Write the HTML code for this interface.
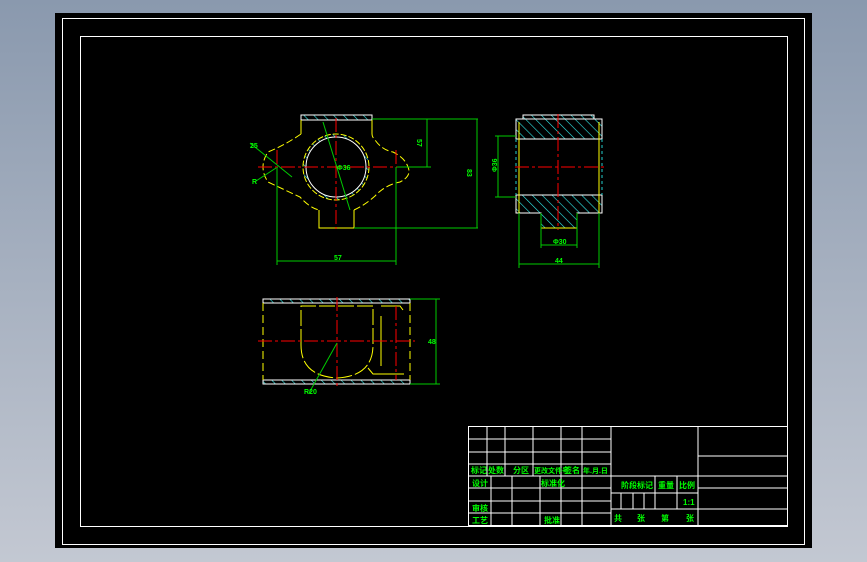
<!DOCTYPE html>
<html><head><meta charset="utf-8"><style>
html,body{margin:0;padding:0}
body{width:867px;height:562px;overflow:hidden;background:linear-gradient(#8a99ae,#c3c8d2);position:relative}
svg{position:absolute;left:0;top:0}
text{font-family:"Liberation Sans","Noto Sans CJK SC",sans-serif;fill:#0f0;font-weight:bold}
</style></head><body>
<svg width="867" height="562" viewBox="0 0 867 562">
<defs>
<pattern id="h" width="7" height="7" patternUnits="userSpaceOnUse" patternTransform="rotate(-45)">
<line x1="0" y1="0" x2="0" y2="7" stroke="#3ee" stroke-width="1.2"/></pattern>
</defs>
<rect x="55" y="13" width="757" height="535" fill="#000"/>
<rect x="62.5" y="18.5" width="742" height="526" fill="none" stroke="#fff"/>
<rect x="80.5" y="36.5" width="707" height="490" fill="none" stroke="#fff"/>

<!-- front view -->
<g fill="none">
<rect x="301" y="115" width="71" height="5" fill="url(#h)" stroke="#fff"/>
<path d="M301 120 V134 M372 120 V134" stroke="#ff0"/>
<path d="M301 134 Q285 145 268 152 Q258 167 268 182 Q285 190 300 197 Q310 208 319 210 M354 210 Q365 205 375 196 Q385 185 400 182 Q412 176 408 167 Q405 158 393 152 Q382 150 375 140 Q372 137 372 134" stroke="#ff0" stroke-dasharray="7,3"/>
<path d="M319 210 V228 H354 V210" stroke="#ff0"/>
<circle cx="336" cy="167" r="33" fill="url(#h)" stroke="#ff0" stroke-dasharray="6,2"/>
<circle cx="336" cy="167" r="30" fill="#000" stroke="#fff"/>
<path d="M258 167 H420 M336 118 V229 M277 150 V167 M396 150 V167" stroke="#f00" stroke-dasharray="14,3,3,3"/>
<path d="M354 228 H478 M477 119 V228 M372 119 H478 M427 119 V167 M397 167 H431 M277 167 V265 M396 167 V265 M277 261 H396" stroke="#0c0"/>
<path d="M323 122 L350 210 M250 143 L292 177 M256 181 L276 168" stroke="#0c0"/>
</g>
<text x="416" y="146" font-size="7" transform="rotate(90 420 143)">57</text>
<text x="466" y="176" font-size="7" transform="rotate(90 470 173)">83</text>
<text x="334" y="260" font-size="7">57</text>
<text x="337" y="170" font-size="7">Φ36</text>
<text x="250" y="148" font-size="7">25</text>
<text x="252" y="184" font-size="7">R</text>

<!-- side view -->
<g fill="none">
<rect x="523" y="115" width="71" height="4" fill="url(#h)" stroke="#fff"/>
<rect x="516" y="119" width="86" height="20" fill="url(#h)" stroke="#fff"/>
<path d="M516 195 H602 V213 H577 V228 H541 V213 H516 Z" fill="url(#h)" stroke="#fff"/>
<path d="M516 139 V195 M602 139 V195" stroke="#2cc" stroke-dasharray="3,3"/>
<path d="M519 122 V213 M599 122 V213 M541 213 V228 H577 V213" stroke="#ff0"/>
<path d="M558 114 V230 M515 167 H604" stroke="#f00" stroke-dasharray="14,3,3,3"/>
<path d="M498 136 V197 M495 136 H516 M495 197 H516 M541 213 V248 M577 213 V248 M541 245 H577 M519 213 V268 M599 213 V268 M519 264 H599" stroke="#0c0"/>
</g>
<text x="489" y="170" font-size="7" transform="rotate(-90 494 167)">Φ36</text>
<text x="553" y="244" font-size="7">Φ30</text>
<text x="555" y="263" font-size="7">44</text>

<!-- top view -->
<g fill="none">
<rect x="263" y="299" width="147" height="4" fill="url(#h)" stroke="#fff"/>
<rect x="263" y="380" width="147" height="4" fill="url(#h)" stroke="#fff"/>
<path d="M263 303 V380 M410 303 V380" stroke="#ff0" stroke-dasharray="8,4"/>
<path d="M301 345 V306 H373 V345 Q373 376 337 378 Q301 376 301 345" stroke="#ff0" stroke-dasharray="16,3"/>
<path d="M381 306 H400 L403 310 M381 316 V366 M368 368 L373 374 H404" stroke="#ff0"/>
<path d="M337 297 V387 M396 306 V380 M258 341 H415" stroke="#f00" stroke-dasharray="14,3,3,3"/>
<path d="M436 299 V384 M410 299 H440 M410 384 H440 M337 343 L309 393" stroke="#0c0"/>
</g>
<text x="428" y="344" font-size="7">48</text>
<text x="304" y="394" font-size="7">R20</text>

<!-- title block -->
<g stroke="#fff" fill="none" stroke-width="1">
<rect x="468.5" y="426.5" width="319" height="99"/>
<path d="M468 439H611 M468 452H611 M468 464H611 M468 476H787 M468 488H611 M468 501H611 M468 513H611"/>
<path d="M487 427V476 M505 427V476 M533 427V476 M561 427V476 M582 427V476 M611 427V526"/>
<path d="M491 476V526 M512 476V526 M540 476V526 M561 476V526 M582 476V526"/>
<path d="M611 493H698 M611 509H787 M655 476V509 M677 476V509 M621 493V509 M633 493V509 M644 493V509 M698 427V526 M698 456H787 M698 488H787"/>
</g>
<g font-size="8">
<text x="471" y="473">标记</text><text x="488" y="473">处数</text><text x="513" y="473">分区</text>
<text x="534" y="473" font-size="7">更改文件号</text><text x="564" y="473">签名</text><text x="583" y="473" font-size="7">年.月.日</text>
<text x="472" y="486">设计</text><text x="541" y="486">标准化</text>
<text x="472" y="511">审核</text>
<text x="472" y="523">工艺</text><text x="544" y="523">批准</text>
<text x="621" y="488">阶段标记</text><text x="658" y="488">重量</text><text x="679" y="488">比例</text>
<text x="683" y="505">1:1</text>
<text x="614" y="521">共</text><text x="637" y="521">张</text><text x="661" y="521">第</text><text x="686" y="521">张</text>
</g>
</svg>
</body></html>
